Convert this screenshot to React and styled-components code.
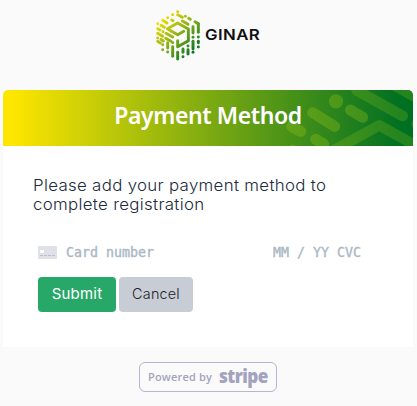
import React from "react";
import styled, { createGlobalStyle } from "styled-components";

const GlobalStyle = createGlobalStyle`
  *, *::before, *::after { box-sizing: border-box; }
  html, body { margin: 0; background: #fafafa; }
  body { overflow: hidden; }
`;

const Page = styled.div`
  width: 417px;
  height: 406px;
  padding: 0 4px 0 3px;
  display: flex;
  flex-direction: column;
  background: #fafafa;
`;

const Brand = styled.header`
  height: 90px;
  flex: none;
  display: flex;
  padding: 10px 0 0 152px;
`;

const BrandMark = styled.svg`
  width: 46px;
  height: 51px;
  flex: none;
`;

const BrandName = styled.span`
  margin: 16px 0 0 4px;
  font: 600 15px/18px Inter, sans-serif;
  letter-spacing: 0.35px;
  transform: scaleX(1.12);
  transform-origin: left;
  color: #111;
`;

const Card = styled.main`
  height: 257px;
  flex: none;
  background: #fff;
  border-radius: 5px 5px 0 0;
  overflow: hidden;
`;

const Banner = styled.div`
  position: relative;
  height: 56px;
  display: flex;
  justify-content: center;
  background: linear-gradient(90deg, #fee600 0%, #fee600 2%, #007022 97%);
`;

const Pattern = styled.svg`
  position: absolute;
  top: 0;
  right: 0;
  width: 136px;
  height: 56px;
`;

const Title = styled.h1`
  position: relative;
  margin: 8px 0 0;
  font: 600 23px/34px "Noto Sans", sans-serif;
  letter-spacing: -0.42px;
  color: #fff;
  white-space: nowrap;
`;

const Message = styled.p`
  margin: 30px 0 0 30px;
  font: 300 16px/19px Inter, sans-serif;
  letter-spacing: 0.3px;
  transform: scaleX(1.053);
  transform-origin: left;
  color: #212b3c;
  white-space: nowrap;
`;

const CardField = styled.div`
  height: 19px;
  margin: 29px 52px 0 35px;
  display: flex;
  align-items: center;
`;

const CardIcon = styled.svg`
  width: 19px;
  height: 13px;
  margin-right: 9px;
`;

const Placeholder = styled.span`
  font: 400 13.3px/19px "DejaVu Sans Mono", monospace;
  -webkit-text-stroke: 0.35px #aab7c4;
  color: #aab7c4;
  white-space: pre;
  margin-left: ${(p) => (p.$end ? "auto" : 0)};
`;

const Actions = styled.div`
  display: flex;
  gap: 3px;
  margin: 15px 0 0 35px;
`;

const Button = styled.button`
  width: ${(p) => (p.$primary ? 78 : 74)}px;
  height: 35px;
  padding: 0 0 2px;
  border: 0;
  border-radius: 4px;
  font: ${(p) => (p.$primary ? 400 : 300)} ${(p) => (p.$primary ? 15 : 14.4)}px/20px Inter, sans-serif;
  letter-spacing: 0.2px;
  color: ${(p) => (p.$primary ? "#fff" : "#212529")};
  background: ${(p) => (p.$primary ? "#28a868" : "#c8ccd4")};
`;

const StripeBadge = styled.footer`
  width: 138px;
  height: 30px;
  margin: 15px 0 0 136px;
  padding-left: 8px;
  display: flex;
  border: 1px solid #b6b6ce;
  border-radius: 6px;
  color: #a3a3bd;
`;

const Powered = styled.span`
  width: 71px;
  font: 600 11px/28px "Open Sans", sans-serif;
  letter-spacing: 0.18px;
  white-space: nowrap;
`;

const Stripe = styled.span`
  font: 800 19.5px/25px "Open Sans", sans-serif;
  letter-spacing: -0.6px;
  transform: scaleX(0.88);
  transform-origin: left;
`;

const markLines = [
  [98, 35, 98, 35], [83, 44, 83, 44], [98, 44, 112, 52], [121, 49, 121, 49], [131, 55, 136, 58], [150, 65, 160, 71],
  [68, 53, 68, 53], [80, 60, 84, 62], [53, 61, 66, 69], [112, 63, 129, 73],
  [38, 71, 38, 71], [48, 76, 58, 82],
  [38, 86, 45, 90], [54, 95, 54, 95],
  [63, 100, 83, 111], [38, 100, 53, 109], [62, 115, 78, 124],
  [38, 124, 46, 129], [38, 114, 38, 114], [48, 118, 55, 123],
  [160, 71, 160, 97], [160, 111, 160, 111], [160, 124, 160, 128], [160, 141, 160, 141],
  [144, 80, 144, 99], [144, 112, 144, 112], [144, 124, 144, 147], [144, 157, 144, 157],
  [129, 138, 129, 138], [129, 149, 129, 162], [114, 147, 114, 157], [114, 170, 114, 170],
  [98, 157, 98, 177], [83, 140, 83, 169], [83, 128, 83, 128],
  [68, 128, 68, 144], [68, 156, 68, 156], [53, 134, 53, 134], [53, 149, 53, 149],
];

const Dashes = ({ lines }) =>
  lines.map(([x1, y1, x2, y2], i) => <path key={i} d={`M${x1} ${y1}L${x2} ${y2 + 0.01}`} />);

export default function App() {
  return (
    <>
      <GlobalStyle />
      <Page>
        <Brand>
          <BrandMark viewBox="30 30 138 153" fill="none">
            <defs>
              <linearGradient id="mark" gradientUnits="userSpaceOnUse" x1="45" y1="55" x2="145" y2="155">
                <stop stopColor="#f8e200" />
                <stop offset="0.5" stopColor="#8fb017" />
                <stop offset="1" stopColor="#087824" />
              </linearGradient>
            </defs>
            <g stroke="url(#mark)" strokeWidth="8.8" strokeLinecap="round" strokeLinejoin="round">
              <Dashes lines={markLines} />
              <path d="M116 94L98 104L67 86L98 69L130 87V122L98 140V122" />
            </g>
          </BrandMark>
          <BrandName>GINAR</BrandName>
        </Brand>
        <Card>
          <Banner>
            <Pattern viewBox="210 30 408 168" fill="none" stroke="#a6cb16" strokeOpacity="0.29" strokeLinecap="round">
              <g strokeWidth="33">
                <Dashes lines={[[254, 139, 281, 154], [317, 98, 383, 139], [326, 178, 350, 192], [430, 90, 467, 112], [257, 211, 257, 211]]} />
              </g>
              <path d="M387 64V64.01" strokeWidth="43" />
              <g strokeOpacity="0.22">
                <path d="M449 31L587 108M555 12L625 51" strokeWidth="32" />
                <path d="M360 222L517 136L650 210" strokeWidth="32" strokeLinejoin="round" />
                <path d="M630 132V132.01" strokeWidth="34" />
              </g>
            </Pattern>
            <Title>Payment Method</Title>
          </Banner>
          <Message>Please add your payment method to<br />complete registration</Message>
          <CardField>
            <CardIcon viewBox="0 0 19 13">
              <rect width="19" height="13" rx="1" fill="#dfe0e8" />
              <path d="M2 4h4v3H2z" fill="#fff" />
              <path d="M2 9.5h15" stroke="#b9bfcd" strokeDasharray="3 1" />
            </CardIcon>
            <Placeholder>Card number</Placeholder>
            <Placeholder $end>MM / YY CVC</Placeholder>
          </CardField>
          <Actions>
            <Button $primary>Submit</Button>
            <Button>Cancel</Button>
          </Actions>
        </Card>
        <StripeBadge>
          <Powered>Powered by</Powered>
          <Stripe>stripe</Stripe>
        </StripeBadge>
      </Page>
    </>
  );
}
